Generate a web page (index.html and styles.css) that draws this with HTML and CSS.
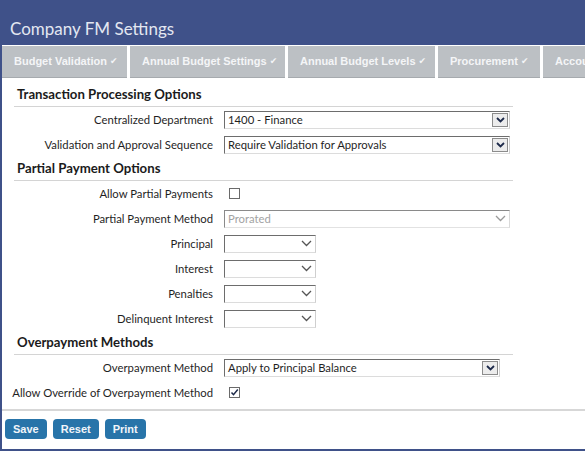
FILE: index.html
```html
<!DOCTYPE html>
<html>
<head>
<meta charset="utf-8">
<link rel="stylesheet" href="styles.css">
</head>
<body>
<div class="page">
  <header class="topbar"><h1 class="title">Company FM Settings</h1></header>
  <div class="main">
    <nav class="tabs">
      <div class="tab t1">Budget Validation <span class="ck">✔</span></div>
      <div class="tab t2">Annual Budget Settings <span class="ck">✔</span></div>
      <div class="tab t3">Annual Budget Levels <span class="ck">✔</span></div>
      <div class="tab t4">Procurement <span class="ck">✔</span></div>
      <div class="tab t5">Accounts Payable <span class="ck">✔</span></div>
    </nav>
    <div class="content">
      <section class="section">
        <h2 class="sec-title">Transaction Processing Options</h2>
        <div class="row"><label class="lbl">Centralized Department</label>
          <div class="select wide"><span class="val">1400 - Finance</span><span class="btn"><svg width="9" height="6" viewBox="0 0 9 6"><path d="M1 1l3.5 3.5L8 1" fill="none" stroke="#1d2a4a" stroke-width="1.8"/></svg></span></div></div>
        <div class="row"><label class="lbl">Validation and Approval Sequence</label>
          <div class="select wide"><span class="val">Require Validation for Approvals</span><span class="btn"><svg width="9" height="6" viewBox="0 0 9 6"><path d="M1 1l3.5 3.5L8 1" fill="none" stroke="#1d2a4a" stroke-width="1.8"/></svg></span></div></div>
      </section>
      <section class="section">
        <h2 class="sec-title">Partial Payment Options</h2>
        <div class="row"><label class="lbl">Allow Partial Payments</label><span class="cbox"></span></div>
        <div class="row"><label class="lbl">Partial Payment Method</label>
          <div class="select wide disabled"><span class="val">Prorated</span><span class="arr"><svg width="11" height="7" viewBox="0 0 11 7"><path d="M1 1l4.5 4.5L10 1" fill="none" stroke="#9a9a9a" stroke-width="1.3"/></svg></span></div></div>
        <div class="row"><label class="lbl">Principal</label>
          <div class="select small"><span class="val"></span><span class="arr"><svg width="11" height="7" viewBox="0 0 11 7"><path d="M1 1l4.5 4.5L10 1" fill="none" stroke="#555" stroke-width="1.3"/></svg></span></div></div>
        <div class="row"><label class="lbl">Interest</label>
          <div class="select small"><span class="val"></span><span class="arr"><svg width="11" height="7" viewBox="0 0 11 7"><path d="M1 1l4.5 4.5L10 1" fill="none" stroke="#555" stroke-width="1.3"/></svg></span></div></div>
        <div class="row"><label class="lbl">Penalties</label>
          <div class="select small"><span class="val"></span><span class="arr"><svg width="11" height="7" viewBox="0 0 11 7"><path d="M1 1l4.5 4.5L10 1" fill="none" stroke="#555" stroke-width="1.3"/></svg></span></div></div>
        <div class="row"><label class="lbl">Delinquent Interest</label>
          <div class="select small"><span class="val"></span><span class="arr"><svg width="11" height="7" viewBox="0 0 11 7"><path d="M1 1l4.5 4.5L10 1" fill="none" stroke="#555" stroke-width="1.3"/></svg></span></div></div>
      </section>
      <section class="section">
        <h2 class="sec-title">Overpayment Methods</h2>
        <div class="row"><label class="lbl">Overpayment Method</label>
          <div class="select medium"><span class="val">Apply to Principal Balance</span><span class="btn"><svg width="9" height="6" viewBox="0 0 9 6"><path d="M1 1l3.5 3.5L8 1" fill="none" stroke="#1d2a4a" stroke-width="1.8"/></svg></span></div></div>
        <div class="row"><label class="lbl">Allow Override of Overpayment Method</label><span class="cbox checked"><svg width="9" height="9" viewBox="0 0 9 9"><path d="M1.5 4.5l2 2.2L7.8 1.5" fill="none" stroke="#1d2a4a" stroke-width="1.5"/></svg></span></div>
      </section>
    </div>
    <div class="actions">
      <button class="bt">Save</button>
      <button class="bt">Reset</button>
      <button class="bt">Print</button>
    </div>
  </div>
</div>
</body>
</html>
```
FILE: styles.css
```css
html, body { margin: 0; padding: 0; }
body { width: 585px; height: 451px; overflow: hidden; background: #3f5189; font-family: Lato, "Open Sans", sans-serif; }
.page { width: 585px; height: 451px; display: flex; flex-direction: column; }
.topbar { height: 45px; flex: none; display: flex; align-items: flex-end; }
.title { margin: 0 0 4px 10px; font-weight: 400; font-size: 17px; color: #e3e7f1; line-height: 24px; }
.main { margin-left: 2px; height: 404px; flex: none; background: #fff; display: flex; flex-direction: column; }
.tabs { display: flex; gap: 3px; padding-top: 1px; height: 33px; flex: none; box-sizing: border-box; background: #fff; overflow: hidden; white-space: nowrap; }
.tab { flex: none; background: #bcc0c4; color: #f4f5f7; font-family: "Liberation Sans", Arial, sans-serif; font-weight: 700; font-size: 11px; height: 31px; line-height: 31px; border-bottom: 1px solid #a6aaae; padding: 0 12px; }
.ck { font-family: "DejaVu Sans", sans-serif; font-size: 9px; position: relative; top: -1px; }
.t1 { width: 101px; }
.t2 { width: 131px; }
.t3 { width: 123px; }
.t4 { width: 78px; }
.t5 { width: 100px; }
.content { padding: 5px 0 0 12px; flex: none; }
.section { width: 499px; }
.sec-title { margin: 0; height: 23px; line-height: 23px; font-size: 13.2px; font-weight: 700; color: #1b1b1b; padding-left: 3px; border-bottom: 1px solid #d4d4d4; }
.row { display: flex; align-items: center; height: 25px; }
.lbl { width: 199px; flex: none; display: flex; justify-content: flex-end; white-space: nowrap; font-size: 11.3px; color: #1f1f1f; margin-right: 11px; }
.select { height: 18px; box-sizing: border-box; border: 1px solid; border-color: #6d6d6d #cfcfcf #dcdcdc #6d6d6d; display: flex; align-items: center; background: #fff; }
.select.wide { width: 286px; }
.select.medium { width: 276px; }
.select.small { width: 92px; }
.val { flex: 1; font-size: 11.3px; color: #1f1f1f; padding-left: 3px; line-height: 16px; }
.disabled { border-color: #8a8a8a #dadada #e2e2e2 #8a8a8a; }
.disabled .val { color: #a3a3a3; }
.btn { width: 16px; height: 14px; margin-right: 1px; border: 1px solid #8c8c8c; box-sizing: border-box; background: #ececec; display: flex; align-items: center; justify-content: center; }
.arr { width: 18px; display: flex; justify-content: center; align-items: center; }
.cbox { width: 11px; height: 11px; box-sizing: border-box; border: 1px solid #6a6a6a; margin-left: 5px; display: flex; align-items: center; justify-content: center; background: #fff; }
.actions { border-top: 2px solid #d7d7d7; margin-top: 4px; padding: 8px 0 0 3px; display: flex; gap: 6px; }
.bt { height: 20px; padding: 0 8px; border: none; border-radius: 4px; background: #2874a9; color: #f2f6fa; font-family: "Liberation Sans", Arial, sans-serif; font-weight: 700; font-size: 11px; line-height: 20px; }
```
